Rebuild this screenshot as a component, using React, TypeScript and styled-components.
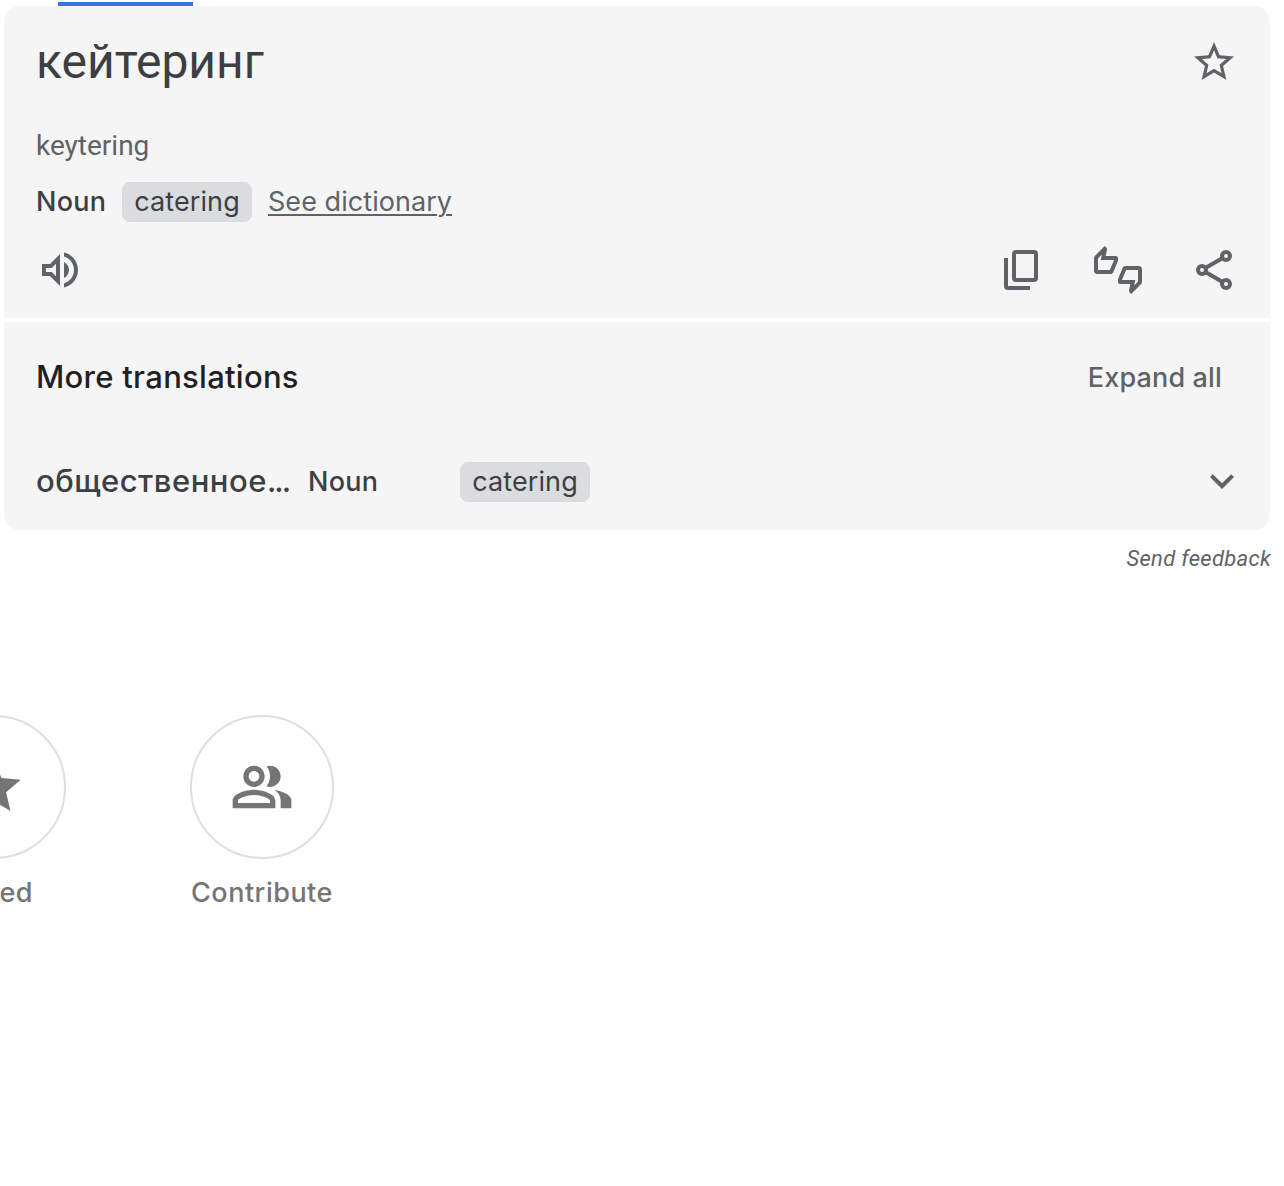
import React from 'react';
import styled, { createGlobalStyle } from 'styled-components';

const GlobalStyle = createGlobalStyle`
  *, *::before, *::after { box-sizing: border-box; }
  body { margin: 0; background: #fff; overflow: hidden; font-family: Inter, "Liberation Sans", sans-serif; }
`;

const Page = styled.main`
  display: flex;
  flex-direction: column;
  width: 1284px;
  height: 1186px;
  overflow: hidden;
  padding-top: 2px;
`;

const ActiveTab = styled.div`
  flex: none;
  width: 135px;
  height: 4px;
  margin-left: 58px;
  background: #3574e2;
`;

const Cards = styled.div`
  display: flex;
  flex-direction: column;
  gap: 4px;
  width: 1266px;
  margin-left: 4px;
  border-radius: 16px;
  overflow: hidden;
`;

const Card = styled.section<{ $height: number }>`
  display: flex;
  flex-direction: column;
  height: ${(p) => p.$height}px;
  padding: 0 32px;
  background: #f5f5f5;
`;

const TitleRow = styled.div`
  display: flex;
  justify-content: space-between;
  height: 112px;
  padding-top: 32px;
`;

const Title = styled.h1`
  margin: -8px 0 0;
  font: 400 48px/64px Roboto, sans-serif;
  color: #3c4043;
`;

const Romanization = styled.div`
  height: 56px;
  padding-top: 8px;
  font: 400 28px/40px Roboto, sans-serif;
  color: #5f6368;
`;

const GlossRow = styled.div`
  display: flex;
  align-items: center;
  height: 56px;
`;

const GlossLine = styled(GlossRow)`
  gap: 16px;
`;

const PartOfSpeech = styled.span<{ $width: number }>`
  width: ${(p) => p.$width}px;
  font-size: 27px;
  font-weight: 500;
  line-height: 40px;
  letter-spacing: 0.25px;
  color: #3c4043;
`;

const Chip = styled.span`
  width: 130px;
  height: 40px;
  border-radius: 8px;
  background: #dadce0;
  color: #3c4043;
  font-size: 27px;
  line-height: 39px;
  letter-spacing: 0.1px;
  text-align: center;
`;

const DictionaryLink = styled.a`
  color: #5f6368;
  font-size: 27px;
  line-height: 40px;
  letter-spacing: 0.05px;
  text-decoration: underline;
  text-decoration-thickness: 2px;
  text-underline-offset: 3px;
`;

const Actions = styled.div`
  display: flex;
  align-items: center;
  height: 80px;
`;

const ActionGroup = styled.div`
  display: flex;
  gap: 48px;
  margin-left: auto;
`;

const IconButton = styled.button`
  display: flex;
  flex: none;
  padding: 0;
  border: 0;
  background: none;
  color: #5f6368;
`;

const SectionHeader = styled.div`
  display: flex;
  align-items: center;
  justify-content: space-between;
  height: 112px;
  padding-right: 16px;
`;

const SectionTitle = styled.h2`
  margin: 0 0 4px;
  color: #202124;
  font-size: 31px;
  font-weight: 500;
  letter-spacing: 0.28px;
`;

const ExpandAll = styled.button`
  padding: 0;
  border: 0;
  background: none;
  color: #5f6368;
  font: 500 27px/40px Inter, sans-serif;
  letter-spacing: 0.15px;
`;

const TranslationRow = styled(GlossRow)`
  height: 96px;
`;

const Term = styled.span`
  width: 272px;
  margin-bottom: 2px;
  color: #3c4043;
  font-size: 31px;
  font-weight: 500;
  line-height: 40px;
  letter-spacing: 0.5px;
  white-space: nowrap;
`;

const Ellipsis = styled.span`
  letter-spacing: -2px;
`;

const RowToggle = styled(IconButton)`
  margin: 0 -8px 2px auto;
`;

const Feedback = styled.a`
  align-self: flex-end;
  margin: 14px 13px 0 0;
  color: #5f6368;
  font: italic 400 22px/30px Roboto, sans-serif;
  letter-spacing: 0.3px;
`;

const Shortcuts = styled.nav`
  display: flex;
  gap: 124px;
  margin: 141px 0 0 -78px;
`;

const Shortcut = styled.div`
  display: flex;
  flex-direction: column;
  align-items: center;
  gap: 14px;
  width: 144px;
`;

const Circle = styled.div`
  display: flex;
  align-items: center;
  justify-content: center;
  width: 144px;
  height: 144px;
  border: 2px solid #dedede;
  border-radius: 50%;
  color: #757575;
`;

const ShortcutLabel = styled.span`
  color: #757575;
  font-size: 27px;
  font-weight: 500;
  line-height: 40px;
  letter-spacing: 0.5px;
`;

const SavedLabel = styled(ShortcutLabel)`
  margin-right: 4px;
  letter-spacing: 0.3px;
`;

function Icon({ d, size = 48 }: { d: string; size?: number }) {
  return (
    <svg width={size} height={size} viewBox="0 0 24 24" fill="currentColor">
      <path d={d} />
    </svg>
  );
}

const paths = {
  starOutline:
    'M22 9.24l-7.19-.62L12 2 9.19 8.63 2 9.24l5.46 4.73L5.82 21 12 17.27 18.18 21l-1.63-7.03L22 9.24zM12 15.4l-3.76 2.27 1-4.28-3.32-2.88 4.38-.38L12 6.1l1.71 4.04 4.38.38-3.32 2.88 1 4.28L12 15.4z',
  star: 'M12 17.27L18.18 21l-1.64-7.03L22 9.24l-7.19-.61L12 2 9.19 8.63 2 9.24l5.46 4.73L5.82 21z',
  volume:
    'M3 9v6h4l5 5V4L7 9H3zm7-.17v6.34L7.83 13H5v-2h2.83L10 8.83zM16.5 12c0-1.77-1.02-3.29-2.5-4.03v8.05c1.48-.73 2.5-2.25 2.5-4.02zM14 3.23v2.06c2.89.86 5 3.54 5 6.71s-2.11 5.85-5 6.71v2.06c4.01-.91 7-4.49 7-8.77 0-4.28-2.99-7.86-7-8.77z',
  thumbs:
    'M12 6c0-.55-.45-1-1-1H5.82l.66-3.18.02-.23c0-.31-.13-.59-.33-.8L5.38 0 .44 4.94C.17 5.21 0 5.59 0 6v6.5c0 .83.67 1.5 1.5 1.5h6.75c.62 0 1.15-.38 1.38-.91l2.26-5.29c.07-.17.11-.36.11-.55V6zm-2 1.13L7.92 12H2V6.21l1.93-1.93L3.36 7H10v.13zM22.5 10h-6.75c-.62 0-1.15.38-1.38.91l-2.26 5.29c-.07.17-.11.36-.11.55V18c0 .55.45 1 1 1h5.18l-.66 3.18-.02.24c0 .31.13.59.33.8l.79.78 4.94-4.94c.27-.27.44-.65.44-1.06v-6.5c0-.83-.67-1.5-1.5-1.5zm-.5 7.79l-1.93 1.93.57-2.72H14v-.13L16.08 12H22v5.79z',
  chevron: 'M16.59 8.59L12 13.17 7.41 8.59 6 10l6 6 6-6z',
  group:
    'M16.67 13.13C18.04 14.06 19 15.32 19 17v3h4v-3c0-2.18-3.57-3.47-6.33-3.87zM15 12c2.21 0 4-1.79 4-4s-1.79-4-4-4c-.47 0-.91.1-1.33.24C14.5 5.27 15 6.58 15 8s-.5 2.73-1.33 3.76c.42.14.86.24 1.33.24zM9 12c2.21 0 4-1.79 4-4s-1.79-4-4-4-4 1.79-4 4 1.79 4 4 4zm0-6c1.1 0 2 .9 2 2s-.9 2-2 2-2-.9-2-2 .9-2 2-2zm0 7c-2.67 0-8 1.34-8 4v3h16v-3c0-2.66-5.33-4-8-4zm6 5H3v-.99C3.2 16.29 6.3 15 9 15s5.8 1.29 6 2v1z',
};

const CopyIcon = () => (
  <svg width="48" height="48" viewBox="0 0 48 48" fill="none" stroke="currentColor" strokeWidth="4">
    <rect x="16" y="6" width="22" height="28" rx="2" />
    <path d="M8 12v28a2 2 0 0 0 2 2h22" />
  </svg>
);

const ShareIcon = () => (
  <svg width="48" height="48" viewBox="0 0 24 24" fill="none" stroke="currentColor" strokeWidth="2">
    <circle cx="18" cy="5" r="2" />
    <circle cx="6" cy="12" r="2" />
    <circle cx="18" cy="19" r="2" />
    <path d="M7.9 10.9l8.2-4.8M7.9 13.1l8.2 4.8" />
  </svg>
);

export default function App() {
  return (
    <Page>
      <GlobalStyle />
      <ActiveTab />
      <Cards>
        <Card $height={312}>
          <TitleRow>
            <Title>кейтеринг</Title>
            <IconButton aria-label="Save translation">
              <Icon d={paths.starOutline} />
            </IconButton>
          </TitleRow>
          <Romanization>keytering</Romanization>
          <GlossLine>
            <PartOfSpeech $width={70}>Noun</PartOfSpeech>
            <Chip>catering</Chip>
            <DictionaryLink>See dictionary</DictionaryLink>
          </GlossLine>
          <Actions>
            <IconButton aria-label="Listen">
              <Icon d={paths.volume} />
            </IconButton>
            <ActionGroup>
              <IconButton aria-label="Copy translation">
                <CopyIcon />
              </IconButton>
              <IconButton aria-label="Rate this translation">
                <Icon d={paths.thumbs} />
              </IconButton>
              <IconButton aria-label="Share translation">
                <ShareIcon />
              </IconButton>
            </ActionGroup>
          </Actions>
        </Card>
        <Card $height={208}>
          <SectionHeader>
            <SectionTitle>More translations</SectionTitle>
            <ExpandAll>Expand all</ExpandAll>
          </SectionHeader>
          <TranslationRow>
            <Term>
              общественное<Ellipsis>...</Ellipsis>
            </Term>
            <PartOfSpeech $width={152}>Noun</PartOfSpeech>
            <Chip>catering</Chip>
            <RowToggle aria-label="Expand row">
              <Icon d={paths.chevron} />
            </RowToggle>
          </TranslationRow>
        </Card>
      </Cards>
      <Feedback>Send feedback</Feedback>
      <Shortcuts>
        <Shortcut>
          <Circle>
            <Icon d={paths.star} size={64} />
          </Circle>
          <SavedLabel>Saved</SavedLabel>
        </Shortcut>
        <Shortcut>
          <Circle>
            <Icon d={paths.group} size={64} />
          </Circle>
          <ShortcutLabel>Contribute</ShortcutLabel>
        </Shortcut>
      </Shortcuts>
    </Page>
  );
}
